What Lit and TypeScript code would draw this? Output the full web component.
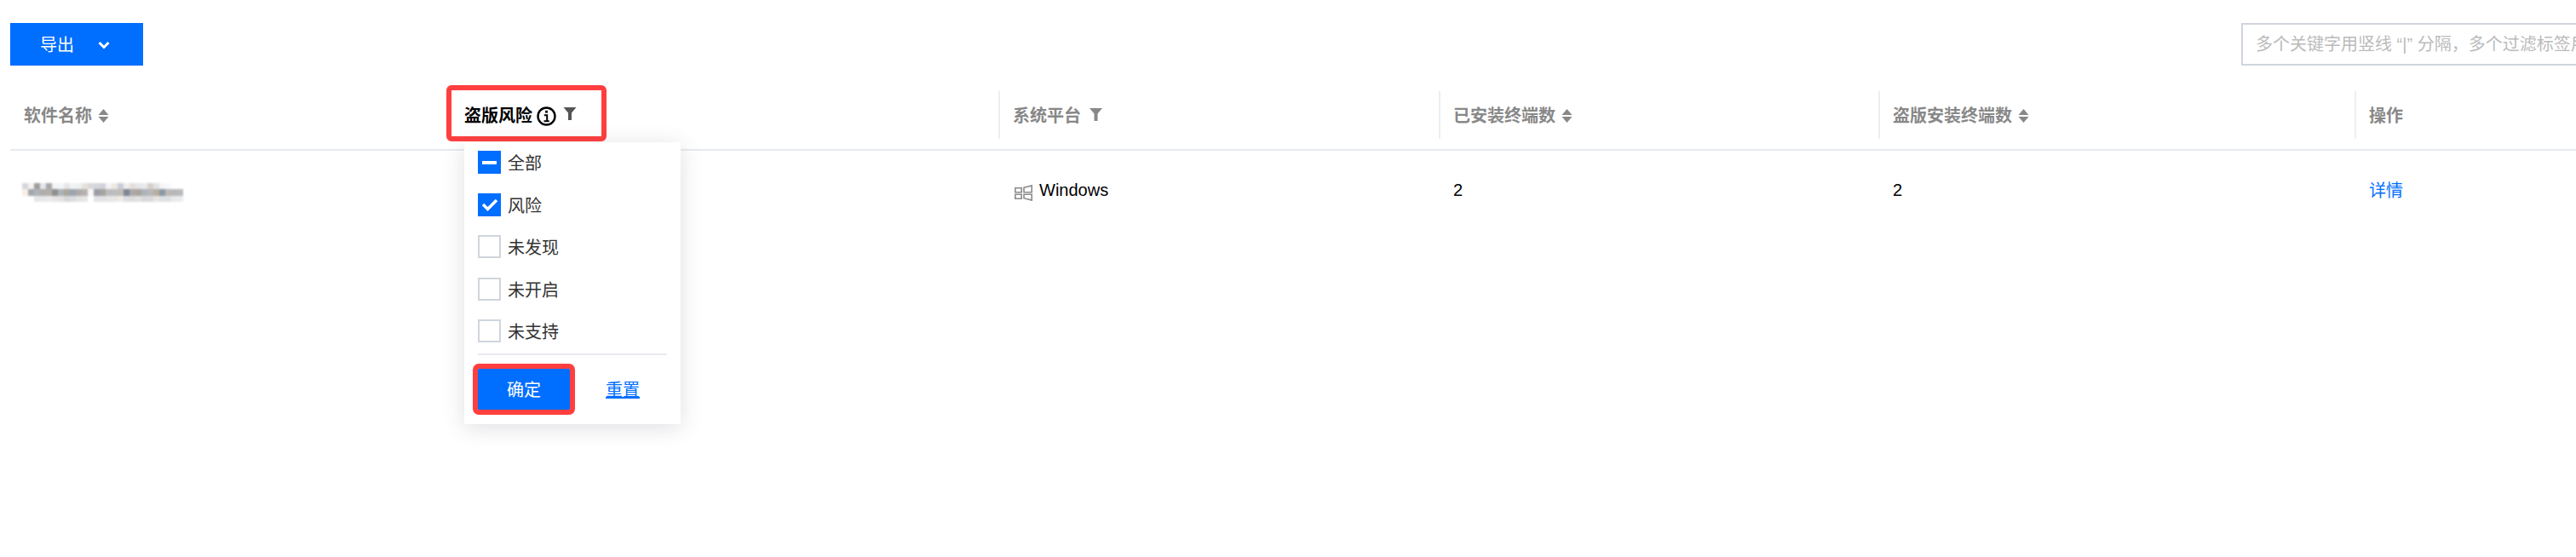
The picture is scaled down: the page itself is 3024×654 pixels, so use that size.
import { LitElement, css, html } from "lit";
import { customElement, state } from "lit/decorators.js";

type CheckState = "none" | "checked" | "partial";

interface FilterOption {
  label: string;
  state: CheckState;
}

// the software name is pixelated in the source, one row of hex colours per mosaic row
const MOSAIC = [
  "d5d5db f6f3ee a19c9c e2e9ee a9a6a7 f2f4f7 f4f5f6 e6e6e8 f3f3f2 f0f1f3 e9e0d8 d8d9dd d5d7dc d2d3da f3f3f5 eee8df c8ccd8 eeeef0 e6dfd9 e3e7ec e8ebee d9cfc5 dfe2e6 f4f5f7 f8f9fb ffffff ffffff",
  "f8efe4 a4a6ad aeb4ba b0acaa b2afae 8e8e8e adb3b7 aaa59e 9aa5b2 aeaba9 b5b2b1 fbf8f5 9a9da8 a7a39d bcbcbe bcbdbe c0bdb8 7f8591 a9a8ac aca49c acb3bb b8b8ba b9ae9f 8a98a5 bab8b8 b9b8b8 b8bbbd",
  "ffffff ffffff e4e6e8 e8e8ea ebebec e6e4e4 e4e2e2 d8d8d8 d9dde0 e4e3e3 e6e6e6 ffffff e3e4e6 e2e2e2 e6e6e7 e8e7e5 efebe5 dcdde2 dcdcdd e2e1df d6d8dc d8d9db e8e4df dde0e4 dfe0e3 eaeaea ececee",
].flatMap((row) => row.split(" "));

const sortIcon = html`<svg class="sort" width="13" height="16" viewBox="0 0 13 16">
  <path d="M6.500 0 12.500 7H.5zM6.500 16 .5 9h12z" fill="currentColor"></path>
</svg>`;

const filterIcon = html`<svg class="filter" width="15" height="15" viewBox="0 0 15 15">
  <path d="M0 0h15L9.500 6.500V15h-4V6.500z" fill="currentColor"></path>
</svg>`;

@customElement("app-root")
export class AppRoot extends LitElement {
  @state()
  options: FilterOption[] = [
    { label: "全部", state: "partial" },
    { label: "风险", state: "checked" },
    { label: "未发现", state: "none" },
    { label: "未开启", state: "none" },
    { label: "未支持", state: "none" },
  ];

  static styles = css`
    :host {
      display: block;
      width: 3024px;
      height: 654px;
      overflow: hidden;
      position: relative;
      background: #fff;
      color: #000;
      font-family: "Liberation Sans", "Noto Sans CJK SC", sans-serif;
      font-size: 20px;
    }

    .toolbar {
      display: flex;
      justify-content: space-between;
      padding: 27px 0 0 12px;
      height: 50px;
    }

    .export {
      width: 156px;
      height: 50px;
      display: flex;
      align-items: center;
      padding: 0 0 2px 35px;
      gap: 28px;
      box-sizing: border-box;
      background: #006eff;
      color: #fff;
    }

    .export svg {
      margin-top: 3px;
    }

    .search {
      width: 393px;
      height: 50px;
      box-sizing: border-box;
      border: 2px solid #d0d5dd;
      border-right: 0;
      padding-left: 15px;
      line-height: 46px;
      color: #bbb;
      white-space: nowrap;
      overflow: hidden;
    }

    .table {
      display: grid;
      grid-template-columns: 516px 644px 517px 516px 559px 260px;
      margin: 22px 0 0 12px;
    }

    .head {
      height: 78px;
      box-sizing: border-box;
      padding-top: 8px;
      border-bottom: 2px solid #e7eaf0;
    }

    .head > div {
      height: 56px;
      box-sizing: border-box;
      display: flex;
      align-items: center;
      gap: 7px;
      padding: 0 0 2px 15px;
      font-weight: 700;
      color: #888;
      border-left: 2px solid #eceef2;
    }

    .head.first > div {
      border-left: 0;
      padding-left: 16px;
    }

    .head.first > .risk {
      color: #000;
      padding-left: 17px;
      gap: 5px;
    }

    .sort {
      color: #888;
      margin-top: 4px;
    }

    .filter {
      color: #888;
      margin: 0 0 0 3px;
    }

    .risk .filter {
      width: 16px;
      color: #555;
      margin: -1px 0 0 3px;
    }

    .info {
      margin-top: 5px;
    }

    .cell {
      height: 94px;
      padding: 34px 0 0 17px;
      box-sizing: border-box;
      line-height: 24px;
    }

    .mosaic {
      display: grid;
      grid-template-columns: repeat(27, 7px);
      grid-auto-rows: 7.300px;
      margin: 4px 0 0 -3px;
      filter: blur(0.800px);
    }

    .platform {
      display: flex;
      align-items: flex-start;
      gap: 8px;
      padding-left: 19px;
    }

    .platform svg {
      margin-top: 6px;
    }

    .link {
      display: block;
      padding-top: 1px;
      color: #006eff;
    }

    .annotated {
      position: absolute;
      left: 524px;
      top: 100px;
      width: 188px;
      height: 66px;
      box-sizing: border-box;
      border: 6px solid #ff3f3f;
      border-radius: 6px;
    }

    .popup {
      position: absolute;
      left: 545px;
      top: 167px;
      width: 254px;
      height: 331px;
      box-sizing: border-box;
      padding: 10px 16px 0;
      background: #fff;
      box-shadow: 0 4px 24px rgba(54, 58, 80, 0.160);
    }

    .option {
      display: flex;
      align-items: center;
      gap: 8px;
      height: 27px;
      margin-bottom: 22.500px;
      color: #333;
    }

    .box {
      width: 27px;
      height: 27px;
      box-sizing: border-box;
      border: 2px solid #d0d5dd;
      display: flex;
      align-items: center;
      justify-content: center;
    }

    .box.on {
      background: #006eff;
      border-color: #006eff;
    }

    .dash {
      width: 17px;
      height: 4px;
      background: #fff;
    }

    .actions {
      border-top: 2px solid #e7eaf0;
      margin-top: -9.500px;
      padding-top: 16px;
      display: flex;
      align-items: center;
    }

    .confirm {
      width: 108px;
      height: 48px;
      box-sizing: border-box;
      padding-bottom: 2px;
      display: flex;
      align-items: center;
      justify-content: center;
      background: #006eff;
      color: #fff;
      outline: 6px solid #ff3f3f;
      border-radius: 1px;
    }

    .reset {
      margin: -2px 0 0 42px;
      color: #006eff;
      text-decoration: underline;
    }
  `;

  renderBox(state: CheckState) {
    if (state === "none") return html`<span class="box"></span>`;
    return html`<span class="box on">
      ${state === "partial"
        ? html`<span class="dash"></span>`
        : html`<svg width="20" height="16" viewBox="0 0 20 16">
            <path d="M2 8l5.500 5.500L18 3" fill="none" stroke="#fff" stroke-width="3.500"></path>
          </svg>`}
    </span>`;
  }

  render() {
    return html`
      <div class="toolbar">
        <div class="export">
          <span>导出</span>
          <svg width="14" height="10" viewBox="0 0 14 10">
            <path d="M1.500 2l5.500 5.500L12.500 2" fill="none" stroke="#fff" stroke-width="3"></path>
          </svg>
        </div>
        <div class="search">多个关键字用竖线 “|” 分隔，多个过滤标签用回车键分隔</div>
      </div>

      <div class="table">
        <div class="head first"><div>软件名称 ${sortIcon}</div></div>
        <div class="head first">
          <div class="risk">
            盗版风险
            <svg class="info" width="23" height="23" viewBox="0 0 23 23">
              <circle cx="11.500" cy="11.500" r="10" fill="none" stroke="#000" stroke-width="2.400"></circle>
              <rect x="10.100" y="4.800" width="2.800" height="2.800"></rect>
              <path d="M8.800 10.300h3.400v6.500M8.500 17.300h6.200" fill="none" stroke="#000" stroke-width="2"></path>
            </svg>
            ${filterIcon}
          </div>
        </div>
        <div class="head"><div>系统平台 ${filterIcon}</div></div>
        <div class="head"><div>已安装终端数 ${sortIcon}</div></div>
        <div class="head"><div>盗版安装终端数 ${sortIcon}</div></div>
        <div class="head"><div>操作</div></div>

        <div class="cell">
          <div class="mosaic">
            ${MOSAIC.map((c) => html`<span style="background:#${c}"></span>`)}
          </div>
        </div>
        <div class="cell"></div>
        <div class="cell platform">
          <svg width="21" height="19" viewBox="0 0 21 19">
            <path
              d="M.8 3.800h7.400v4.900H.8zM.8 11.300h7.400v4.900H.8zM11 3.300 20.200.9v7.800H11zM11 11.300h9.200v6.800L11 15.700z"
              fill="none"
              stroke="#8a8a8a"
              stroke-width="1.600"
            ></path>
          </svg>
          <span>Windows</span>
        </div>
        <div class="cell">2</div>
        <div class="cell">2</div>
        <div class="cell"><span class="link">详情</span></div>
      </div>

      <div class="annotated"></div>

      <div class="popup">
        ${this.options.map(
          (o) => html`<div class="option">${this.renderBox(o.state)}<span>${o.label}</span></div>`
        )}
        <div class="actions">
          <div class="confirm">确定</div>
          <div class="reset">重置</div>
        </div>
      </div>
    `;
  }
}
